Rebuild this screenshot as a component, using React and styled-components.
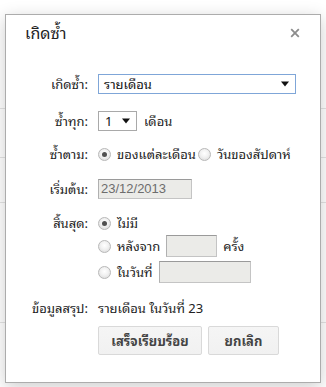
import React from "react";
import styled, { createGlobalStyle } from "styled-components";

const Global = createGlobalStyle`
  html, body { margin: 0; padding: 0; background: #fff; }
  body { font-family: Tahoma, "Noto Sans Thai Looped", Loma, Garuda, "Noto Sans Thai", "Noto Sans", "DejaVu Sans", sans-serif; }
  * { box-sizing: border-box; }
`;

const Stage = styled.div`
  position: relative;
  width: 326px;
  height: 387px;
  overflow: hidden;
  background: #fff;
`;

const BackPage = styled.div`
  display: flex;
  flex-direction: column;
`;

const BackRow = styled.div`
  height: ${(p) => p.$h}px;
  border-bottom: 1px solid ${(p) => (p.$line ? "#e4e4e4" : "transparent")};
`;

const Dialog = styled.div`
  position: absolute;
  left: 5px;
  top: 14px;
  width: 316px;
  height: 369px;
  background: #fff;
  border: 1px solid #acacac;
  box-shadow: 0 4px 16px rgba(0, 0, 0, 0.2);
  display: flex;
  flex-direction: column;
  color: #222;
  font-size: 13px;
`;

const Header = styled.div`
  display: flex;
  justify-content: space-between;
  align-items: flex-start;
  padding: 7px 20px 0 19px;
  height: 45px;
`;

const Title = styled.div`
  font-size: 16px;
  line-height: 20px;
  color: #222;
`;

const Close = styled.div`
  margin-top: 6px;
  width: 10px;
  height: 10px;
  display: flex;
`;

const Form = styled.div`
  display: flex;
  flex-direction: column;
  padding-top: 14px;
`;

const Field = styled.div`
  display: grid;
  grid-template-columns: 82px 1fr;
  column-gap: 10px;
  align-items: ${(p) => (p.$top ? "start" : "center")};
  margin-top: ${(p) => p.$mt || 0}px;
`;

const Label = styled.div`
  text-align: right;
  line-height: 20px;
  height: 20px;
  white-space: nowrap;
`;

const Controls = styled.div`
  display: flex;
  align-items: center;
  gap: ${(p) => p.$gap ?? 6}px;
  line-height: 20px;
  white-space: nowrap;
`;

const Stack = styled.div`
  display: flex;
  flex-direction: column;
`;

const StackRow = styled(Controls)`
  height: ${(p) => p.$h}px;
  margin-top: ${(p) => p.$mt || 0}px;
`;

const SelectBox = styled.div`
  width: ${(p) => p.$w}px;
  height: 20px;
  border: 1px solid ${(p) => (p.$focus ? "#7fa6d8" : "#a9a9a9")};
  background: #fff;
  display: flex;
  align-items: center;
  justify-content: space-between;
  padding: 0 6px 0 ${(p) => p.$pl ?? 5}px;
  color: #111;
  line-height: 18px;
`;

const TextBox = styled.div`
  width: ${(p) => p.$w}px;
  height: ${(p) => p.$h || 20}px;
  background: #ebebe8;
  border: 1px solid #c4c4c4;
  border-top-color: #9a9a9a;
  border-left-color: #b0b0b0;
  color: #6d6d6d;
  padding-left: 2px;
  line-height: 18px;
  font-family: "Liberation Sans", Arial, sans-serif;
`;

const Option = styled.label`
  display: flex;
  align-items: center;
  gap: 6px;
`;

const Radio = styled.span`
  width: 13px;
  height: 13px;
  border-radius: 50%;
  border: 1px solid #b8b8b8;
  background: radial-gradient(circle at 50% 40%, #ffffff 0%, #f1f1f1 45%, #d6d6d6 100%);
  display: flex;
  align-items: center;
  justify-content: center;
  flex: none;
  &::after {
    content: "";
    width: 5px;
    height: 5px;
    border-radius: 50%;
    background: ${(p) => (p.$checked ? "#505050" : "transparent")};
  }
`;

const Buttons = styled.div`
  display: flex;
  gap: 6px;
  margin-top: 8px;
  padding-left: 92px;
`;

const Button = styled.button`
  width: ${(p) => p.$w}px;
  height: 29px;
  border: 1px solid #d9d9d9;
  border-radius: 2px;
  background: linear-gradient(#f5f5f5, #f1f1f1);
  color: #444;
  font-family: inherit;
  font-size: 13px;
  font-weight: bold;
  padding: 0;
`;

const Arrow = () => (
  <svg width="8" height="6" viewBox="0 0 8 6">
    <path d="M0 0.5 H8 L4 5.5 Z" fill="#111" />
  </svg>
);

export default function App() {
  return (
    <>
      <Global />
      <Stage>
        <BackPage>
          <BackRow $h={109} $line />
          <BackRow $h={49} $line />
          <BackRow $h={45} $line />
          <BackRow $h={120} $line />
        </BackPage>
        <Dialog>
          <Header>
            <Title>เกิดซ้ำ</Title>
            <Close>
              <svg width="10" height="10" viewBox="0 0 10 10">
                <path d="M1.2 1.2 L8.8 8.8 M8.8 1.2 L1.2 8.8" stroke="#8c8c8c" strokeWidth="1.8" />
              </svg>
            </Close>
          </Header>
          <Form>
            <Field>
              <Label>เกิดซ้ำ:</Label>
              <Controls>
                <SelectBox $w={198} $focus>
                  <span>รายเดือน</span>
                  <Arrow />
                </SelectBox>
              </Controls>
            </Field>
            <Field $mt={17}>
              <Label>ซ้ำทุก:</Label>
              <Controls $gap={7}>
                <SelectBox $w={39} $pl={6}>
                  <span>1</span>
                  <Arrow />
                </SelectBox>
                <span>เดือน</span>
              </Controls>
            </Field>
            <Field $mt={13}>
              <Label>ซ้ำตาม:</Label>
              <Controls $gap={2}>
                <Option>
                  <Radio $checked />
                  <span>ของแต่ละเดือน</span>
                </Option>
                <Option>
                  <Radio />
                  <span>วันของสัปดาห์</span>
                </Option>
              </Controls>
            </Field>
            <Field $mt={15}>
              <Label>เริ่มต้น:</Label>
              <Controls>
                <TextBox $w={94}>23/12/2013</TextBox>
              </Controls>
            </Field>
            <Field $mt={14} $top>
              <Label>สิ้นสุด:</Label>
              <Stack>
                <StackRow $h={20}>
                  <Option>
                    <Radio $checked />
                    <span>ไม่มี</span>
                  </Option>
                </StackRow>
                <StackRow $h={22} $mt={2} $gap={6}>
                  <Option>
                    <Radio />
                    <span>หลังจาก</span>
                  </Option>
                  <TextBox $w={51} $h={22} />
                  <span>ครั้ง</span>
                </StackRow>
                <StackRow $h={22} $mt={4} $gap={6}>
                  <Option>
                    <Radio />
                    <span>ในวันที่</span>
                  </Option>
                  <TextBox $w={92} $h={22} />
                </StackRow>
              </Stack>
            </Field>
            <Field $mt={15}>
              <Label>ข้อมูลสรุป:</Label>
              <Controls>รายเดือน ในวันที่ 23</Controls>
            </Field>
            <Buttons>
              <Button $w={104}>เสร็จเรียบร้อย</Button>
              <Button $w={71}>ยกเลิก</Button>
            </Buttons>
          </Form>
        </Dialog>
      </Stage>
    </>
  );
}
